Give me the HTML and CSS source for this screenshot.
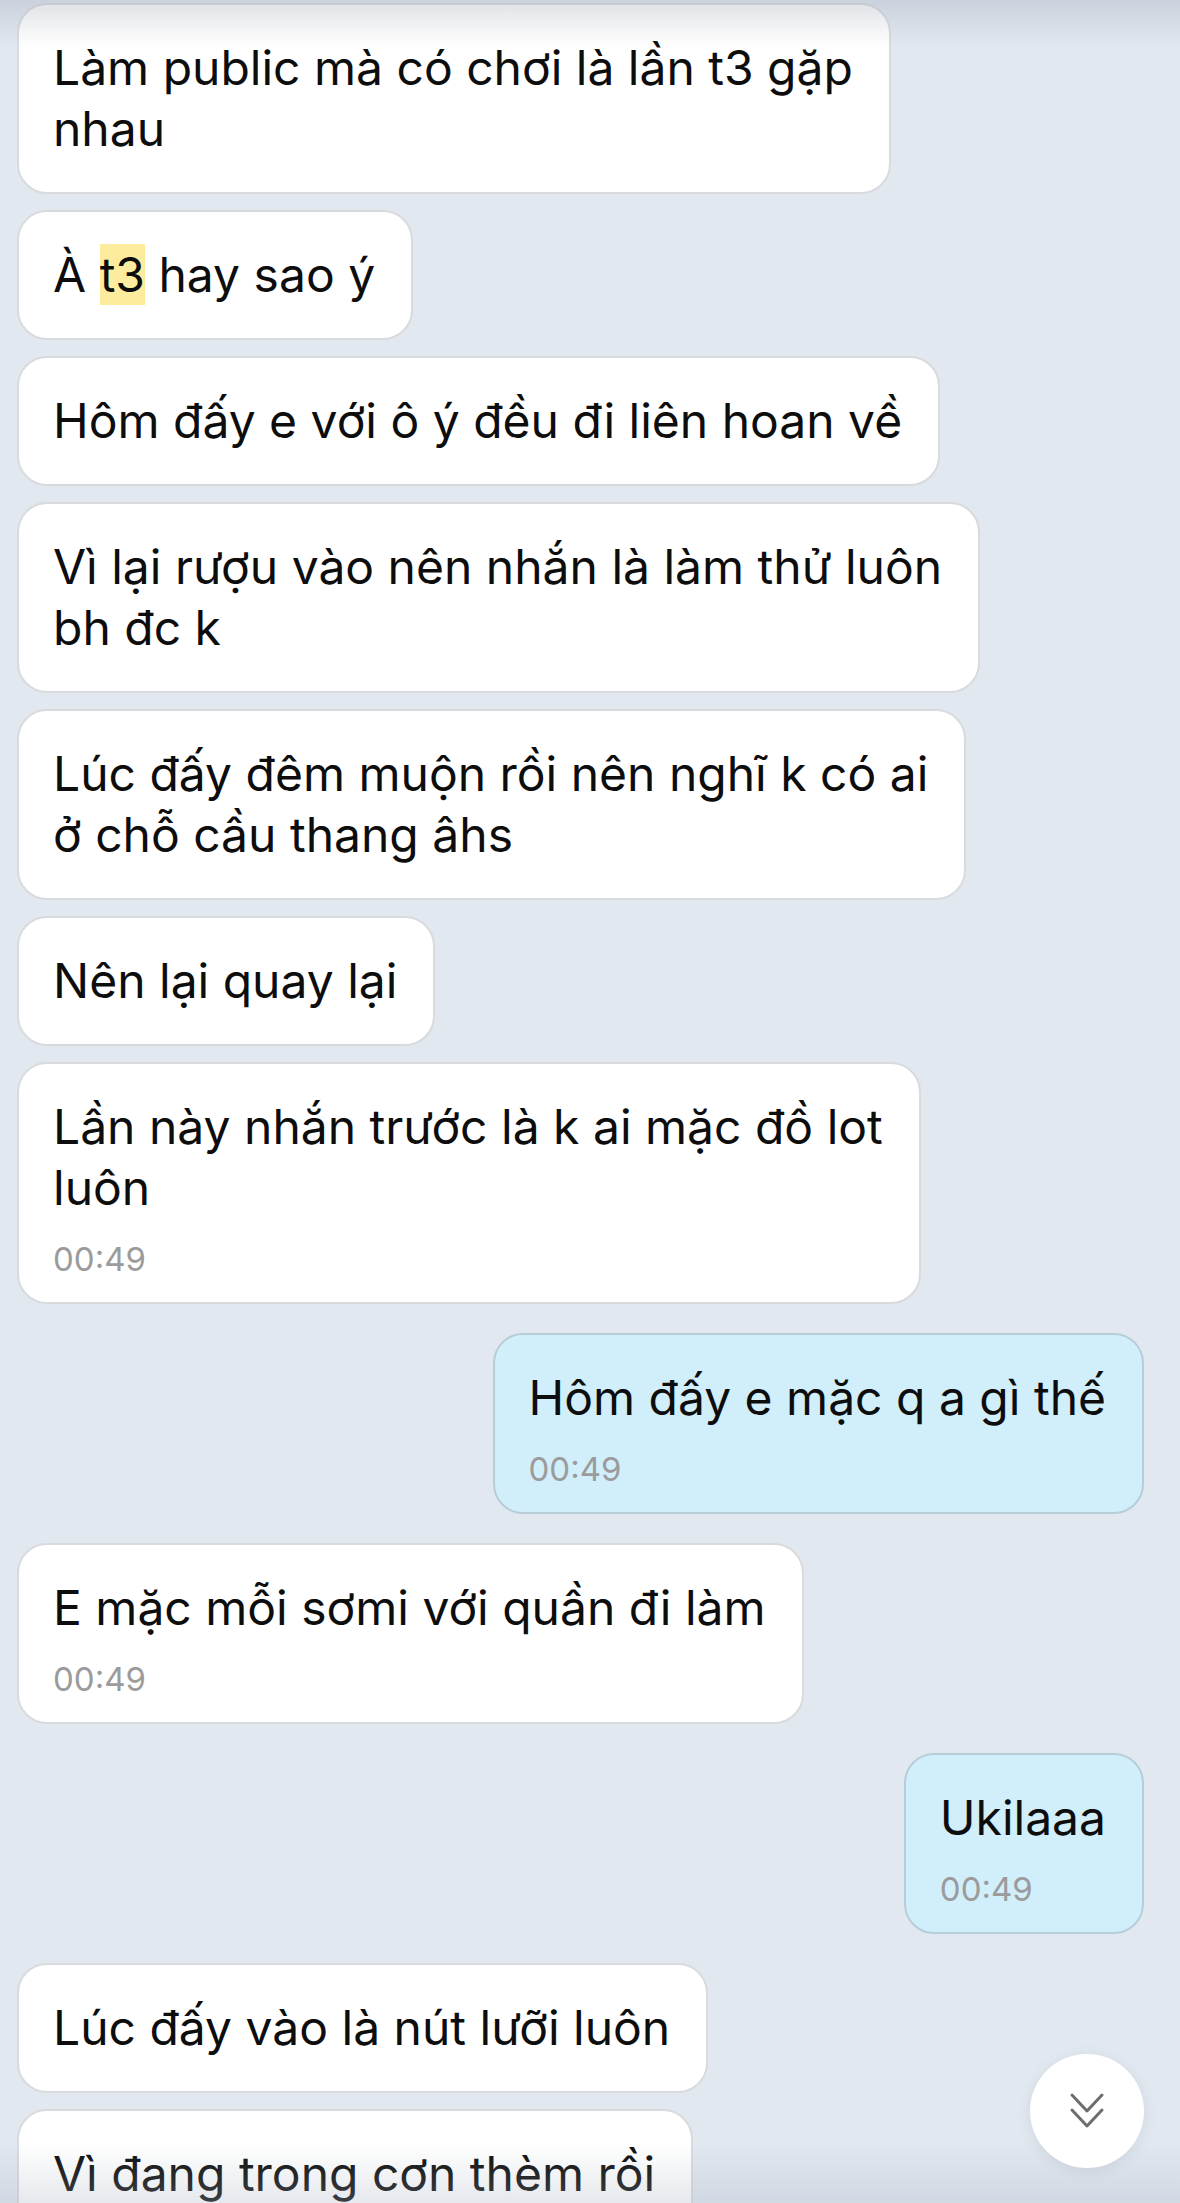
FILE: index.html
```html
<!DOCTYPE html>
<html>
<head>
<meta name="viewport" content="width=device-width, initial-scale=1.0">
<meta charset="utf-8">
<title>Chat</title>
<link rel="stylesheet" href="styles.css">
</head>
<body>
  <div class="chat">
    <div class="msg in first">Làm public mà có chơi là lần t3 gặp<br>nhau</div>
    <div class="msg in">À <span class="mark">t3</span> hay sao ý</div>
    <div class="msg in">Hôm đấy e với ô ý đều đi liên hoan về</div>
    <div class="msg in">Vì lại rượu vào nên nhắn là làm thử luôn<br>bh đc k</div>
    <div class="msg in">Lúc đấy đêm muộn rồi nên nghĩ k có ai<br>ở chỗ cầu thang âhs</div>
    <div class="msg in">Nên lại quay lại</div>
    <div class="msg in timed">Lần này nhắn trước là k ai mặc đồ lot<br>luôn
      <div class="time">00:49</div>
    </div>

    <div class="msg out timed turn">Hôm đấy e mặc q a gì thế
      <div class="time">00:49</div>
    </div>

    <div class="msg in timed turn">E mặc mỗi sơmi với quần đi làm
      <div class="time">00:49</div>
    </div>

    <div class="msg out timed turn">Ukilaaa
      <div class="time">00:49</div>
    </div>

    <div class="msg in turn">Lúc đấy vào là nút lưỡi luôn</div>
    <div class="msg in">Vì đang trong cơn thèm rồi</div>
  </div>

  <div class="shade_top"></div>
  <div class="shade_bottom"></div>

  <button class="scroll_down">
    <svg width="40" height="40" viewBox="0 0 40 40">
      <path d="M5 4 L20 20 L35 4" fill="none" stroke="#6d6d6d" stroke-width="3" stroke-linecap="round" stroke-linejoin="round"/>
      <path d="M5 19 L20 35 L35 19" fill="none" stroke="#6d6d6d" stroke-width="3" stroke-linecap="round" stroke-linejoin="round"/>
    </svg>
  </button>
</body>
</html>
```

FILE: styles.css
```css
html, body {
    margin: 0;
    height: 100%;
    overflow: hidden;
}

body {
    background-color: #e1e8f0;
    font-family: "Inter", "Roboto", "Noto Sans", sans-serif;
    color: #0d0d0d;
}

.chat {
    display: flex;
    flex-direction: column;
    padding: 3px 36px 0 17px;
}

.msg {
    max-width: 960px;
    margin-top: 16px;
    padding: 32px 36px 33px 34px;
    border: 2px solid #d9dadc;
    border-radius: 30px;
    background-color: #ffffff;
    font-size: 48px;
    line-height: 61px;
    white-space: nowrap;
}

.msg.first {
    margin-top: 0;
}

.msg.turn {
    margin-top: 29px;
}

.msg.in {
    align-self: flex-start;
}

.msg.out {
    align-self: flex-end;
    background-color: #d1eefb;
    border-color: #b7ced9;
}

.msg.timed {
    padding-bottom: 23px;
}

.time {
    margin-top: 21px;
    font-size: 33px;
    line-height: 40px;
    color: #9b9b9b;
}

.mark {
    background-color: #fdec9e;
    padding: 1px 0;
}

.shade_top {
    position: fixed;
    top: 0;
    left: 0;
    right: 0;
    height: 46px;
    background: linear-gradient(rgba(160, 168, 182, 0.35), rgba(160, 168, 182, 0));
    pointer-events: none;
}

.shade_bottom {
    position: fixed;
    bottom: 0;
    left: 0;
    right: 0;
    height: 60px;
    background: linear-gradient(rgba(170, 180, 195, 0), rgba(170, 180, 195, 0.3));
    pointer-events: none;
}

.scroll_down {
    position: fixed;
    right: 36px;
    bottom: 35px;
    width: 114px;
    height: 114px;
    padding: 0;
    border: none;
    border-radius: 50%;
    background-color: #ffffff;
    box-shadow: 0 3px 14px rgba(80, 90, 110, 0.12);
    display: flex;
    align-items: center;
    justify-content: center;
}
```
